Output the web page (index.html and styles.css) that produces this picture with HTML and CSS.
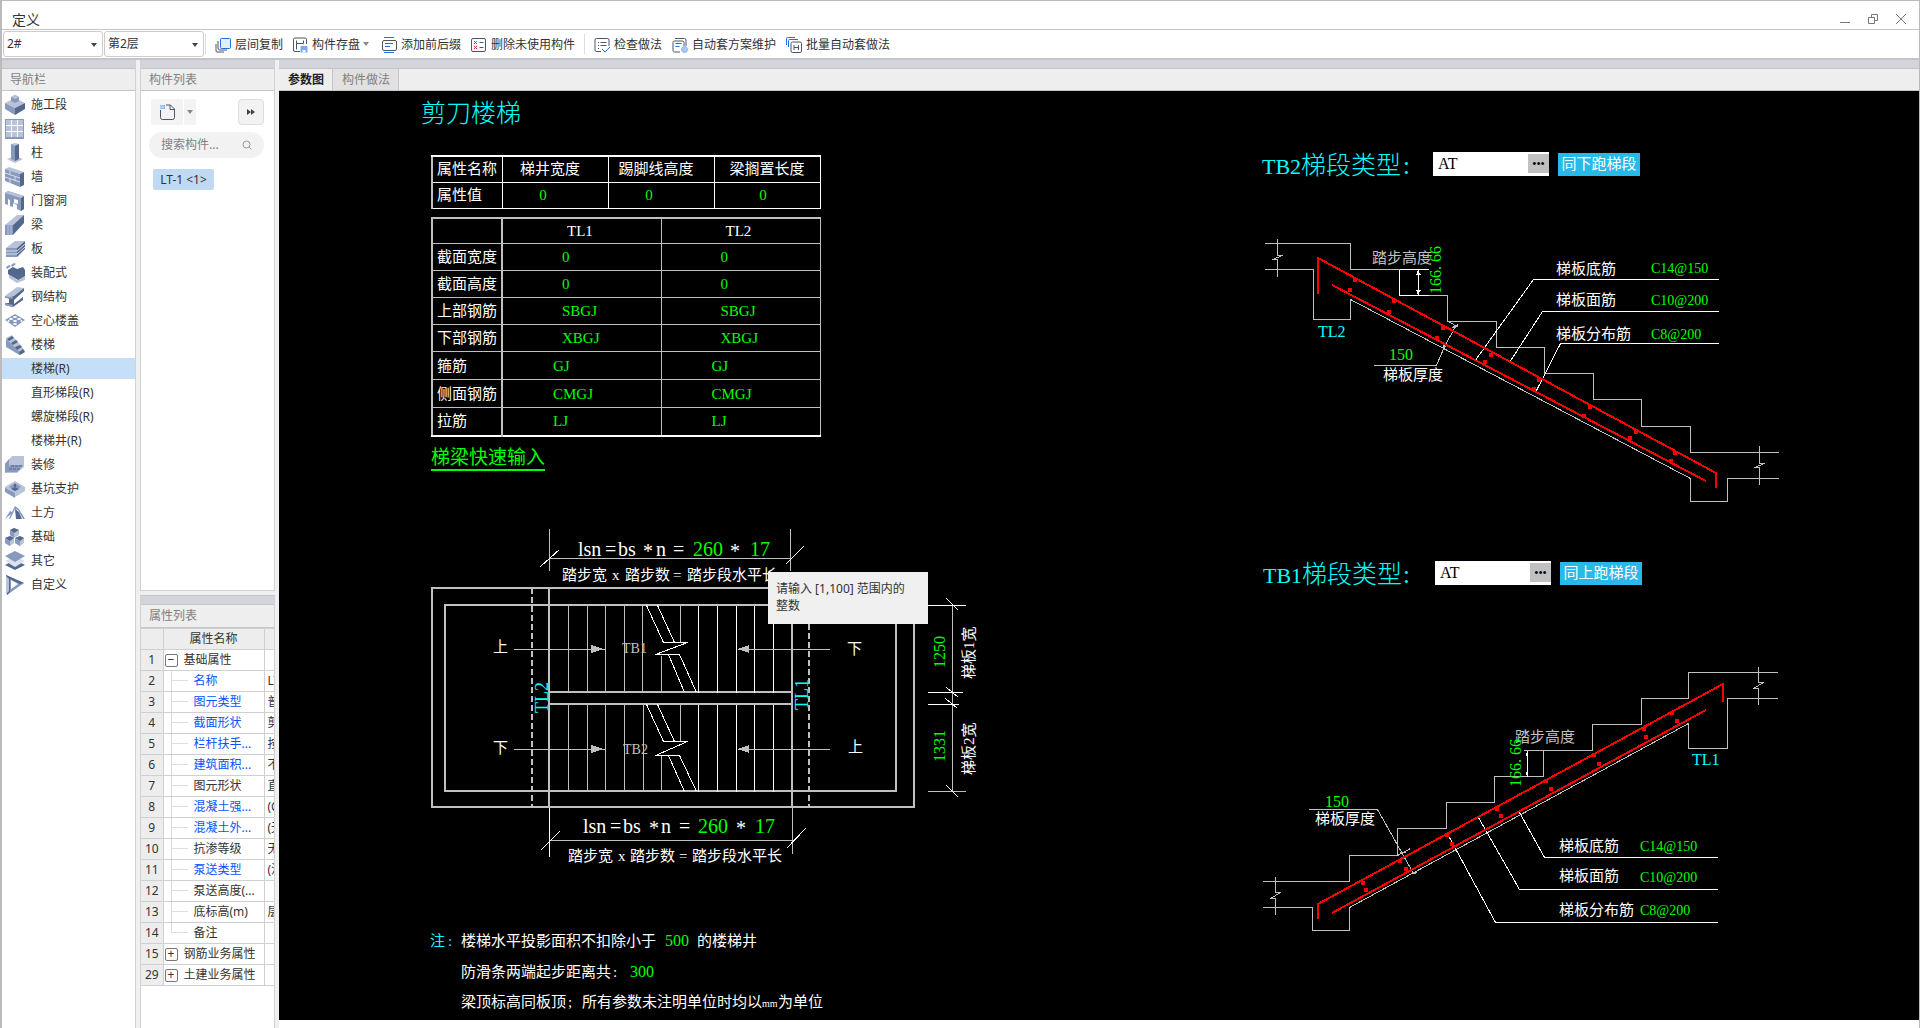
FILE: index.html
```html
<!DOCTYPE html>
<html lang="zh-CN">
<head>
<meta charset="utf-8">
<title>定义</title>
<link rel="stylesheet" href="styles.css">
</head>
<body>
<div class="app">
  <header class="titlebar">
    <h1>定义</h1>
    <div class="window-buttons">
      <button type="button" aria-label="最小化"><svg viewBox="0 0 12 12"><path d="M1 9.500h10"/></svg></button>
      <button type="button" aria-label="还原"><svg viewBox="0 0 12 12"><path d="M1.500 4.500h6v6h-6zM4.500 4.500v-3h6v6h-3"/></svg></button>
      <button type="button" aria-label="关闭"><svg viewBox="0 0 12 12"><path d="M1 1l10 10M11 1L1 11"/></svg></button>
    </div>
  </header>

  <div class="toolbar">
    <div class="combos">
      <label class="combo"><select aria-label="楼栋"><option>2#</option></select></label>
      <label class="combo"><select aria-label="楼层"><option>第2层</option></select></label>
    </div>
    <span class="sep"></span>
    <button type="button" class="tool"><svg viewBox="0 0 16 16"><path d="M1 7v7q0 1 1 1h7" class="k"/><path d="M3 4v7q0 2 2 2h7" class="k"/><rect x="5.500" y="1.500" width="10" height="10" rx="1" fill="#e3eeff" class="b"/></svg>层间复制</button>
    <div class="split">
      <button type="button" class="tool"><svg viewBox="0 0 16 16"><path d="M8 14.500H3q-1.500 0-1.500-1.500V2.500Q1.500 1 3 1h10q1.500 0 1.500 1.500V7M4.500 3.500v9M4.500 6.500h7M11.500 3.500v3" class="k"/><path d="M8.500 9h7v6.500h-7z" fill="#7ba9f3"/><path d="M10.500 13h3v2.500h-3z" fill="#fff"/></svg>构件存盘</button>
      <button type="button" class="drop" aria-label="更多存盘方式"></button>
    </div>
    <button type="button" class="tool"><svg viewBox="0 0 16 16"><path d="M3 .5h10M3 15.500h10M4 6.500h8M4 9.500h5" class="b"/><rect x="1.500" y="3.500" width="14" height="10" rx="1.500" class="k"/></svg>添加前后缀</button>
    <button type="button" class="tool"><svg viewBox="0 0 16 16"><rect x=".5" y="1.500" width="14" height="13" rx="1.500" class="k"/><path d="M3 4l3 3M6 4L3 7M3 9l3 3M6 9l-3 3" class="r"/><path d="M8.500 5.500h4M8.500 10.500h4" class="k"/></svg>删除未使用构件</button>
    <span class="sep"></span>
    <button type="button" class="tool"><svg viewBox="0 0 16 16"><path d="M7 14.500H2.500q-1.500 0-1.500-1.500V3q0-1.500 1.500-1.500h11Q15 1.500 15 3v6M4 5.500h1M6.500 5.500h6M4 8.500h1M6.500 8.500h6M4 11.500h1" class="k"/><path d="M8 12l3 3 5-5" class="b"/></svg>检查做法</button>
    <button type="button" class="tool"><svg viewBox="0 0 16 16"><path d="M3 1.500h9.500Q14 1.500 14 3v6M8 15H2.500Q1 15 1 13.500v-8Q1 4 2.500 4h8Q12 4 12 5.500V9" class="k"/><path d="M3.500 6.500h6M3.500 9.500h4" class="b"/><circle cx="12.500" cy="12.500" r="3" fill="#a9c6f5" stroke="#8fb3ee"/></svg>自动套方案维护</button>
    <button type="button" class="tool"><svg viewBox="0 0 16 16"><path d="M.5 8V1.500q0-1 1-1H9M2.500 10V3.500q0-1 1-1H12" class="b"/><rect x="5" y="5" width="10.500" height="10.500" rx="1.500" class="k"/><path d="M8 8v5M12.500 8v5M8 10.500h4.500" class="k"/></svg>批量自动套做法</button>
  </div>

  <main class="workspace">
    <nav class="panel nav" aria-label="导航栏">
      <div class="grip"></div>
      <h2 class="caption">导航栏</h2>
      <ul class="nav-list">
        <li><a href="#"><svg viewBox="0 0 20 20"><path d="M0 8l10-5 10 5-10 5z" class="l"/><path d="M0 8l10 5v7L0 14z" class="m"/><path d="M20 8l-10 5v7l10-6z" class="d"/><path d="M6 2l4-2 4 2v4l-4 2-4-2z" class="m"/><path d="M6 2l4-2 4 2-4 2z" class="l"/></svg>施工段</a></li>
        <li><a href="#"><svg viewBox="0 0 20 20"><path d="M0 0h19v20H0z" class="m"/><path d="M1 1h17v17H1z" class="l"/><path d="M6.500 1v17M12.500 1v17M1 6.500h17M1 12.500h17" stroke="#fff"/></svg>轴线</a></li>
        <li><a href="#"><svg viewBox="0 0 20 20"><path d="M2 16l8-3 8 3-8 4z" class="l"/><path d="M6 1h4v17l-4-2z" class="m"/><path d="M10 1h4v15l-4 2z" class="d"/><path d="M6 1l4-1 4 1-4 2z" class="l"/></svg>柱</a></li>
        <li><a href="#"><svg viewBox="0 0 20 20"><path d="M0 2l4-2 15 5-4 2z" class="l"/><path d="M0 2l15 5v13L0 14z" class="m"/><path d="M15 7l4-2v13l-4 2z" class="d"/><path d="M0 6l15 5M0 10l15 5M5 4v4M10 10v4M5 12v4" stroke="#d5dceb"/></svg>墙</a></li>
        <li><a href="#"><svg viewBox="0 0 20 20"><path d="M0 2l3-2 16 5v13l-3 2-4-2v-4l-4-2v4l-3-1V9L3 8v6l-3-1z" class="m"/><path d="M16 7l3-2v13l-3 2z" class="d"/><path d="M0 2l3-2 16 5-3 2z" class="l"/><path d="M9 8l4 1v4l-4-1z" fill="#fff"/></svg>门窗洞</a></li>
        <li><a href="#"><svg viewBox="0 0 20 20"><path d="M0 10L12 0h7L8 10z" class="l"/><path d="M0 10h8v10H0z" class="m"/><path d="M8 10L19 0v8L8 20z" class="d"/><path d="M3 10v10M6 10v10" stroke="#b8c3d9"/></svg>梁</a></li>
        <li><a href="#"><svg viewBox="0 0 20 20"><path d="M1 9l9-7h10l-8 7z" class="l"/><path d="M1 9h11v9H1z" class="m"/><path d="M12 9l8-7v8l-8 8z" class="d"/><path d="M1 12h11l8-7M1 15h11l8-7" stroke="#d5dceb" fill="none"/></svg>板</a></li>
        <li><a href="#"><svg viewBox="0 0 20 20"><path d="M4 11l8 6 8-4v4l-8 3-8-5z" class="l"/><path d="M3 7l5-3 4 2 6-2 2 3v6l-7 4-10-6z" class="d"/><path d="M1 4l3-2 2 1-4 3zM6 2l3-2 2 1-4 3z" class="m"/></svg>装配式</a></li>
        <li><a href="#"><svg viewBox="0 0 20 20"><path d="M0 9L12 0l7 1L8 10z" class="l"/><path d="M3 11l6-2L19 1v3L9 13v4l9-7v3L8 20l-8-2v-2h4v-4z" class="d"/><path d="M0 16l8 2v2l-8-2zM0 9l8 1v2l-8-1z" class="m"/></svg>钢结构</a></li>
        <li><a href="#"><svg viewBox="0 0 20 20"><path d="M0 9l10-6 10 6-10 7z" class="m"/><g fill="#fff"><ellipse cx="10" cy="6" rx="2" ry="1"/><ellipse cx="6" cy="8" rx="2" ry="1"/><ellipse cx="14" cy="8" rx="2" ry="1"/><ellipse cx="10" cy="10" rx="2" ry="1"/><ellipse cx="10" cy="13" rx="2" ry="1"/><ellipse cx="3.500" cy="10" rx="1" ry="1"/><ellipse cx="16.500" cy="10" rx="1" ry="1"/></g></svg>空心楼盖</a></li>
        <li><a href="#"><svg viewBox="0 0 20 20"><path d="M1 3l6-3 3 4 4 4 3 4 3 4-6 4L1 11z" class="l"/><path d="M1 4l14 13v3L1 12z" class="m"/><path d="M2 4l5-3 2 2-5 3zM6 8l5-3 2 2-5 3zM10 12l5-2 2 2-5 3zM14 17l4-3 2 3-5 3z" class="d"/></svg>楼梯</a></li>
        <li class="selected"><a href="#" aria-current="true">楼梯(R)</a></li>
        <li><a href="#">直形梯段(R)</a></li>
        <li><a href="#">螺旋梯段(R)</a></li>
        <li><a href="#">楼梯井(R)</a></li>
        <li><a href="#"><svg viewBox="0 0 20 20"><path d="M0 9l7-8h12v11l-7 6H0z" class="l"/><path d="M0 9l4-5v9l-4 5z" class="m"/><path d="M5 10h13l-6 7H1z" class="m"/><path d="M6 11h12M4 14h12" stroke="#54688e" stroke-dasharray="3 1"/></svg>装修</a></li>
        <li><a href="#"><svg viewBox="0 0 20 20"><path d="M0 8l10-6 10 6v4l-10 6-10-6z" class="l"/><path d="M0 9l10 5v5L0 13z" class="m"/><path d="M4 8l6-4 6 4-6 4z" class="m"/><path d="M6 10l4-2 4 2-4 2zM9 5h2v3H9z" class="d"/></svg>基坑支护</a></li>
        <li><a href="#"><svg viewBox="0 0 20 20"><path d="M0 16l5-8 2 1 3-6 4 3 6 10h-2L13 7l-3-1-5 10H4l2-5z" class="m"/><path d="M10 6l4 3 3 7h-6z" class="d"/></svg>土方</a></li>
        <li><a href="#"><svg viewBox="0 0 20 20"><path d="M5 3l4-2 5 2v5l-5 3-4-3zM0 11l5-2 4 2v5l-4 3-5-3zM10 11l5-2 4 2v5l-4 3-5-3z" class="l"/><path d="M5 3l4-2 5 2-5 3zM0 11l5-2 4 2-4 3zM10 11l5-2 4 2-4 3z" class="d"/><path d="M5 4l4 2v5l-4-3zM0 12l5 2v5l-5-3zM10 12l5 2v5l-5-3z" class="m"/></svg>基础</a></li>
        <li><a href="#"><svg viewBox="0 0 20 20"><path d="M0 14l10-5 10 5-10 5z" class="d"/><path d="M0 10l10-5 10 5-10 6z" fill="#dce2ee"/><path d="M0 5l10-5 10 5-10 6z" class="m"/></svg>其它</a></li>
        <li><a href="#"><svg viewBox="0 0 20 20"><path d="M1 0l18 8L2 20z" class="m"/><path d="M1 0l18 8-4 1L5 4v13l-3 3z" class="d"/><path d="M6 5l7 4-7 5z" fill="#fff"/><path d="M1 1l3 3v12l-3 3z" class="l"/></svg>自定义</a></li>
      </ul>
    </nav>

    <div class="side">
      <section class="panel components">
        <div class="grip"></div>
        <h2 class="caption">构件列表</h2>
        <div class="comp-body">
          <div class="comp-tools">
            <button type="button" class="new" aria-label="新建"><svg viewBox="0 0 16 16"><path d="M1.500 6v7.500q0 2 2 2h10q2 0 2-2V5l-4-4H7M11 1v4.500h4" class="k"/><path d="M1 1h5v4H1z" fill="#6fa0ee"/><path d="M2 1v4M4 1v4M1 3h5" stroke="#c7dcff"/></svg></button>
            <button type="button" class="drop boxed" aria-label="新建选项"></button>
            <button type="button" class="more" aria-label="展开"><svg viewBox="0 0 8 6"><path d="M0 0l4 3-4 3zM4 0l4 3-4 3z" fill="#444"/></svg></button>
          </div>
          <label class="search"><input type="text" placeholder="搜索构件..." aria-label="搜索构件"><svg viewBox="0 0 10 10"><circle cx="4.500" cy="4.500" r="3.500"/><path d="M7 7l2.500 2.500"/></svg></label>
          <button type="button" class="chip">LT-1 &lt;1&gt;</button>
        </div>
      </section>

      <section class="panel props">
        <div class="grip"></div>
        <h2 class="caption">属性列表</h2>
        <div class="props-clip">
        <table class="props-table">
          <colgroup><col class="c-no"><col class="c-name"><col class="c-val"></colgroup>
          <thead><tr><th></th><th>属性名称</th><th></th></tr></thead>
          <tbody>
            <tr><th>1</th><td><div class="cell"><button type="button" class="fold">−</button>基础属性</div></td><td></td></tr>
            <tr><th>2</th><td><div class="cell"><i></i><b>名称</b></div></td><td>LT</td></tr>
            <tr><th>3</th><td><div class="cell"><i></i><b>图元类型</b></div></td><td>普</td></tr>
            <tr><th>4</th><td><div class="cell"><i></i><b>截面形状</b></div></td><td>剪</td></tr>
            <tr><th>5</th><td><div class="cell"><i></i><b>栏杆扶手...</b></div></td><td>按</td></tr>
            <tr><th>6</th><td><div class="cell"><i></i><b>建筑面积...</b></div></td><td>不</td></tr>
            <tr><th>7</th><td><div class="cell"><i></i>图元形状</div></td><td>直</td></tr>
            <tr><th>8</th><td><div class="cell"><i></i><b>混凝土强...</b></div></td><td>(C</td></tr>
            <tr><th>9</th><td><div class="cell"><i></i><b>混凝土外...</b></div></td><td>(无</td></tr>
            <tr><th>10</th><td><div class="cell"><i></i>抗渗等级</div></td><td>无</td></tr>
            <tr><th>11</th><td><div class="cell"><i></i><b>泵送类型</b></div></td><td>(混</td></tr>
            <tr><th>12</th><td><div class="cell"><i></i>泵送高度(...</div></td><td></td></tr>
            <tr><th>13</th><td><div class="cell"><i></i>底标高(m)</div></td><td>层</td></tr>
            <tr><th>14</th><td><div class="cell"><i class="last"></i>备注</div></td><td></td></tr>
            <tr><th>15</th><td><div class="cell"><button type="button" class="fold">+</button>钢筋业务属性</div></td><td></td></tr>
            <tr><th>29</th><td><div class="cell"><button type="button" class="fold">+</button>土建业务属性</div></td><td></td></tr>
          </tbody>
        </table>
        </div>
      </section>
    </div>

    <section class="editor">
      <div class="grip"></div>
      <div class="tabs" role="tablist">
        <button type="button" role="tab" aria-selected="true" class="active">参数图</button>
        <button type="button" role="tab" aria-selected="false">构件做法</button>
      </div>
      <div class="canvas">
        <svg class="drawing" width="1641" height="929" viewBox="279 91 1641 929">
          <!-- plan view -->
          <g class="w2">
            <path d="M432 588H914V807H432zM445 605H896V791H445zM549 588V807M792 588V807M549 692H792M549 704H792"/>
            <path d="M532 588V807M809 588V807" stroke-dasharray="6 3"/>
          </g>
          <g class="w1" transform="translate(.5 .5)">
            <path d="M568 605V692M587 605V692M605 605V692M624 605V692M642 605V692M661 655V692M680 605V642M568 704V791M587 704V791M605 704V791M624 704V791M643 704V791M661 755V791M680 704V741"/>
            <path class="wh" d="M698 605V692M717 605V692M736 605V692M754 605V692M773 605V692M698 704V791M717 704V791M736 704V791M754 704V791M773 704V791"/>
            <path class="wh" d="M646 605L663 642H687L655 654H679L696 692M657 605L674 642M668 654L684 692M646 704L663 741H687L655 755H679L696 791M657 704L674 741M668 755L684 791"/>
            <path d="M513 649H604M513 749H604M829 649H737M829 749H737"/>
            <path d="M549 528V570M790 528V570M549 558H790M549 840H792M792 807V853M952 605V791M927 791H965"/>
            <path class="wh" d="M549 807V856M540 566L559 549M785 564L803 546M540 850L559 831M786 848L805 828M927 605H965M927 692H962M927 704H958M946 598L958 610M946 687L958 697M945 698L957 708M946 785L958 797"/>
          </g>
          <path class="grey" d="M591 645L604 649L591 653zM591 745L604 749L591 753zM749 645L738 649L749 653zM749 745L738 749L749 753z"/>

          <!-- TB2 section -->
          <g class="w1" transform="translate(.5 .5)">
            <path d="M1264 243H1350V269H1428M1264 269H1313V319H1350V299L1690 478V501H1727V478H1778M1399 295H1447V321H1496V347H1544V373H1593V399H1641V426H1690V452H1778"/>
            <path d="M1277 238V255H1282L1272 259H1277V276M1759 445V463H1764L1754 467H1759V484"/>
            <path d="M1373 365H1436L1444 346L1455 326M1448 321L1458 327M1452 327L1458 324M1443 347L1443 342L1446 347"/>
            <path class="wh" d="M1399 269H1428M1399 269V295H1428M1418 269V295M1474 361L1533 279H1718M1509 362L1542 311H1718M1535 392L1560 343H1718"/>
          </g>
          <path class="white" d="M1418 270L1421 275H1416zM1418 295L1421 290H1416z"/>
          <path class="bar" d="M1318 294V258L1716 473V488M1332 285L1706 481"/>
          <path class="dots" d="M1355 280h0M1394 301h0M1443 328h0M1491 355h0M1539 380h0M1590 407h0M1636 432h0M1675 453h0M1350 290h0M1389 312h0M1437 338h0M1485 362h0M1534 389h0M1584 416h0M1630 438h0M1671 461h0"/>

          <!-- TB1 section -->
          <g class="w1" transform="translate(.5 .5)">
            <path d="M1262 881H1349V855H1397V828H1446V802H1494V776H1543V750M1523 750H1592V724H1641V698H1688V672H1777M1777 698H1727V748H1688V723L1349 907V930H1312V907H1262"/>
            <path d="M1275 876V892H1280L1270 898H1275V914M1758 666V682H1763L1753 688H1758V704"/>
            <path d="M1308 809H1377L1413 873L1417 872M1397 855L1410 848M1399 852H1405"/>
            <path class="wh" d="M1527 750V776M1526 752V755M1526 771V774M1519 812L1544 857H1717M1478 817L1519 889H1717M1449 837L1495 922H1717"/>
          </g>
          <path class="bar" d="M1318 919V904L1723 684V702M1332 913L1706 710"/>
          <path class="dots" d="M1363 883h0M1400 861h0M1447 835h0M1497 809h0M1546 781h0M1594 755h0M1644 729h0M1672 713h0M1366 890h0M1406 869h0M1452 844h0M1501 816h0M1551 789h0M1599 764h0M1646 737h0M1677 721h0"/>

          <g class="t15">
            <text class="t25 cy" x="421" y="122">剪刀楼梯</text>
            <text x="493" y="652">上</text><text x="493" y="753">下</text><text x="847" y="654">下</text><text x="848" y="752">上</text>
            <text class="dim" x="622" y="653">TB1</text><text class="dim" x="623" y="754">TB2</text>
            <text class="t18 cy" transform="translate(548 713) rotate(-90)">TL2</text>
            <text class="t18 cy" transform="translate(808 710) rotate(-90)">TL1</text>
            <text class="t20" y="556"><tspan x="578">lsn</tspan><tspan x="605">=</tspan><tspan x="618">bs</tspan><tspan x="656">n</tspan><tspan x="673">=</tspan><tspan class="gr" x="693">260</tspan><tspan class="gr" x="750">17</tspan></text>
            <text class="t20" y="558"><tspan x="643">*</tspan><tspan x="730">*</tspan></text>
            <text y="580"><tspan x="562">踏步宽</tspan><tspan x="612">x</tspan><tspan x="625">踏步数</tspan><tspan x="673">=</tspan><tspan x="687">踏步段水平长</tspan></text>
            <text class="t20" y="833"><tspan x="583">lsn</tspan><tspan x="610">=</tspan><tspan x="623">bs</tspan><tspan x="661">n</tspan><tspan x="679">=</tspan><tspan class="gr" x="698">260</tspan><tspan class="gr" x="755">17</tspan></text>
            <text class="t20" y="835"><tspan x="649">*</tspan><tspan x="736">*</tspan></text>
            <text y="861"><tspan x="568">踏步宽</tspan><tspan x="618">x</tspan><tspan x="630">踏步数</tspan><tspan x="679">=</tspan><tspan x="692">踏步段水平长</tspan></text>
            <text class="gr t16" transform="translate(945 668) rotate(-90)">1250</text>
            <text class="gr t16" transform="translate(945 762) rotate(-90)">1331</text>
            <text transform="translate(974 679) rotate(-90)">梯板1宽</text>
            <text transform="translate(974 775) rotate(-90)">梯板2宽</text>

            <text y="946"><tspan class="cy" x="430">注</tspan><tspan class="cy" x="448">:</tspan><tspan x="461">楼梯水平投影面积不扣除小于</tspan><tspan class="gr t16" x="665">500</tspan><tspan x="697">的楼梯井</tspan></text>
            <text y="977"><tspan x="461">防滑条两端起步距离共</tspan><tspan x="613">:</tspan><tspan class="gr t16" x="630">300</tspan></text>
            <text y="1007"><tspan x="461">梁顶标高同板顶</tspan><tspan x="568">;</tspan><tspan x="582">所有参数未注明单位时均以</tspan><tspan class="mm" x="762">mm</tspan><tspan x="778">为单位</tspan></text>

            <text class="cy" y="174"><tspan class="t22" x="1262">TB2</tspan><tspan class="t25" x="1301">梯段类型</tspan><tspan class="t25" x="1403">:</tspan></text>
            <text class="dim15" x="1372" y="263">踏步高度</text>
            <text class="gr t16" transform="translate(1441 294) rotate(-90)"><tspan x="0">166.</tspan><tspan x="32">66</tspan></text>
            <text class="cy t16" x="1318" y="337">TL2</text>
            <text class="gr t16" x="1389" y="360">150</text><text x="1383" y="380">梯板厚度</text>
            <text x="1556" y="274">梯板底筋</text><text class="gr t14" x="1651" y="273">C14@150</text>
            <text x="1556" y="305">梯板面筋</text><text class="gr t14" x="1651" y="305">C10@200</text>
            <text x="1556" y="339">梯板分布筋</text><text class="gr t14" x="1651" y="339">C8@200</text>

            <text class="cy" y="583"><tspan class="t22" x="1263">TB1</tspan><tspan class="t25" x="1302">梯段类型</tspan><tspan class="t25" x="1403">:</tspan></text>
            <text class="dim15" x="1515" y="742">踏步高度</text>
            <text class="gr t16" transform="translate(1521 787) rotate(-90)"><tspan x="0">166.</tspan><tspan x="32">66</tspan></text>
            <text class="cy t16" x="1692" y="765">TL1</text>
            <text class="gr t16" x="1325" y="807">150</text><text x="1315" y="824">梯板厚度</text>
            <text x="1559" y="851">梯板底筋</text><text class="gr t14" x="1640" y="851">C14@150</text>
            <text x="1559" y="881">梯板面筋</text><text class="gr t14" x="1640" y="882">C10@200</text>
            <text x="1559" y="915">梯板分布筋</text><text class="gr t14" x="1640" y="915">C8@200</text>
          </g>
        </svg>

        <div class="tables">
          <table class="cad first">
            <colgroup><col class="k1"><col class="k2"><col class="k2"><col class="k2"></colgroup>
            <tr><th>属性名称</th><th class="mid">梯井宽度</th><th class="mid">踢脚线高度</th><th class="mid wide">梁搁置长度</th></tr>
            <tr><th>属性值</th><td class="zero">0</td><td class="zero">0</td><td class="zero wide">0</td></tr>
          </table>
          <table class="cad second">
            <colgroup><col class="k1"><col class="k3"><col class="k3"></colgroup>
            <tr class="top"><th></th><th class="head">TL1</th><th class="head">TL2</th></tr>
            <tr><th>截面宽度</th><td>0</td><td>0</td></tr>
            <tr><th>截面高度</th><td>0</td><td>0</td></tr>
            <tr><th>上部钢筋</th><td>SBGJ</td><td>SBGJ</td></tr>
            <tr><th>下部钢筋</th><td>XBGJ</td><td>XBGJ</td></tr>
            <tr class="near"><th>箍筋</th><td>GJ</td><td>GJ</td></tr>
            <tr class="near"><th>侧面钢筋</th><td>CMGJ</td><td>CMGJ</td></tr>
            <tr class="near"><th>拉筋</th><td>LJ</td><td>LJ</td></tr>
          </table>
          <a href="#" class="quick">梯梁快速输入</a>
        </div>

        <div class="type-row tb2">
          <div class="picker"><input type="text" value="AT" aria-label="TB2梯段类型"><button type="button" aria-label="选择类型">•••</button></div>
          <button type="button" class="same">同下跑梯段</button>
        </div>
        <div class="type-row tb1">
          <div class="picker"><input type="text" value="AT" aria-label="TB1梯段类型"><button type="button" aria-label="选择类型">•••</button></div>
          <button type="button" class="same">同上跑梯段</button>
        </div>

        <div class="tip" role="tooltip">请输入 [1,100] 范围内的整数</div>
      </div>
    </section>
  </main>
</div>
</body>
</html>
```
FILE: styles.css
```css
* { box-sizing: border-box; }

body {
  margin: 0;
  background: #fff;
  color: #333;
  font: 12px/16px "Noto Sans", "Noto Sans CJK SC", sans-serif;
}

button, input, select {
  margin: 0;
  padding: 0;
  border: 0;
  background: none;
  color: inherit;
  font: inherit;
}

h1, h2 { margin: 0; font-weight: 400; }

.app {
  display: flex;
  flex-direction: column;
  height: 100vh;
  border: solid #bbb;
  border-width: 1px 1px 0 2px;
}

/* title bar */
.titlebar {
  display: flex;
  justify-content: space-between;
  height: 29px;
  padding: 9px 12px 0 10px;
  border-bottom: 1px solid #c4c4c4;
}
.titlebar h1 { font-size: 14px; line-height: 20px; }
.window-buttons { display: flex; gap: 16px; padding-top: 3px; }
.window-buttons button { width: 12px; height: 12px; }
.window-buttons svg { display: block; fill: none; stroke: #777; }

/* toolbar */
.toolbar {
  display: flex;
  align-items: center;
  gap: 10px;
  height: 30px;
  padding: 0 1px;
  border-bottom: 2px solid #c3c5cb;
}
.combos { display: flex; gap: 1px; margin-right: -8px; }
.combo {
  position: relative;
  width: 100px;
  height: 26px;
  border: 1px solid #ccc;
  border-radius: 3px;
}
.combo select {
  width: 100%;
  height: 100%;
  padding-left: 3px;
  appearance: none;
  outline: 0;
}
.combo::after {
  content: "";
  position: absolute;
  right: 5px;
  top: 11px;
  border: solid transparent;
  border-width: 4px 3px 0;
  border-top-color: #444;
}
.sep { width: 1px; height: 20px; margin: 0 -1px; background: #ddd; }
.tool {
  display: flex;
  align-items: center;
  gap: 4px;
  padding-top: 2px;
  white-space: nowrap;
}
.tool svg { width: 16px; height: 16px; }
.k { fill: none; stroke: #4c5468; }
.b { stroke: #1f6fe5; }
.b:not([fill]) { fill: none; }
.r { fill: none; stroke: #e0333c; }
.split { display: flex; margin: 0 -1px; }
.drop {
  display: flex;
  align-items: center;
  justify-content: center;
  width: 12px;
}
.drop::after {
  content: "";
  border: solid transparent;
  border-width: 4px 3px 0;
  border-top-color: #888;
}

/* workspace */
.workspace {
  display: flex;
  flex: 1;
  gap: 4px;
  min-height: 0;
  background: #f0f0f0;
}
.panel {
  display: flex;
  flex-direction: column;
  border: solid #d0d2d6;
  border-width: 0 1px 0 0;
  background: #fff;
}
.grip {
  flex: none;
  height: 9px;
  border-bottom: 1px solid #c3c5cb;
  background: #d3d5db;
}
.caption {
  flex: none;
  height: 22px;
  padding-left: 8px;
  border-bottom: 1px solid #c3c5cb;
  background: #eee;
  color: #808080;
  font-size: 12px;
  line-height: 22px;
}
.nav { flex: none; width: 134px; }
.nav-list {
  display: flex;
  flex-direction: column;
  gap: 3px;
  margin: 0;
  padding: 3px 0 0;
  list-style: none;
}
.nav-list a {
  display: flex;
  align-items: center;
  height: 21px;
  padding-left: 29px;
  color: #333;
  text-decoration: none;
}
.nav-list svg { width: 20px; height: 20px; margin: 0 6px 0 -26px; }
.nav-list .selected { background: #c6dff8; }
.l { fill: #b8c3d9; }
.m { fill: #8799bd; }
.d { fill: #54688e; }

.side {
  display: flex;
  flex: none;
  flex-direction: column;
  gap: 4px;
  width: 135px;
}
.side .panel { border-left-width: 1px; }
.components { flex: 1; border-bottom-width: 1px; }
.comp-body { padding: 8px 10px 0 8px; }
.comp-tools { display: flex; gap: 1px; padding-left: 2px; }
.new, .boxed, .more { height: 26px; background: #f3f3f3; border-radius: 2px; }
.new { width: 32px; }
.new svg { display: block; width: 16px; height: 16px; margin: auto; }
.more {
  width: 26px;
  margin-left: auto;
  border: 1px solid #ddd;
  border-radius: 4px;
}
.more svg { display: block; width: 8px; height: 6px; margin: auto; }
.search {
  display: flex;
  align-items: center;
  height: 26px;
  margin-top: 7px;
  padding: 0 12px;
  border-radius: 13px;
  background: #f2f2f2;
}
.search input { flex: 1; width: 60px; outline: 0; }
.search input::placeholder { color: #808080; opacity: 1; }
.search svg { width: 10px; height: 10px; fill: none; stroke: #999; }
.chip {
  display: block;
  width: 61px;
  height: 21px;
  margin: 11px 4px 0;
  border-radius: 2px;
  background: #c0daf3;
  white-space: nowrap;
}

/* property grid */
.props { flex: none; height: 433px; overflow: hidden; }
.props .grip { height: 10px; border-top: 1px solid #c3c5cb; }
.props .caption { height: 23px; }
.props-clip { overflow: hidden; }
.props-table {
  width: 220px;
  table-layout: fixed;
  border-collapse: collapse;
}
.c-no { width: 22px; }
.c-name { width: 101px; }
.props-table th, .props-table td {
  height: 21px;
  padding: 0;
  border: 1px solid #d0d0d0;
  border-left: 0;
  font-weight: 400;
  line-height: 20px;
  white-space: nowrap;
}
.props-table th { background: #ededed; }
.props-table tbody td:last-child { padding-left: 3px; }
.cell { display: flex; align-items: center; height: 20px; }
.cell b { color: #0b52ff; font-weight: 400; }
.cell i {
  width: 17px;
  height: 20px;
  margin: 0 6px 0 7px;
  background:
    linear-gradient(#ddd, #ddd) 0 0 / 1px 100% no-repeat,
    linear-gradient(#ddd, #ddd) 0 9px / 100% 1px no-repeat;
}
.cell .last {
  background:
    linear-gradient(#ddd, #ddd) 0 0 / 1px 9px no-repeat,
    linear-gradient(#ddd, #ddd) 0 9px / 100% 1px no-repeat;
}
.fold {
  width: 13px;
  height: 13px;
  margin: 0 6px 0 1px;
  border: 1px solid #777;
  border-radius: 2px;
  line-height: 10px;
}

/* parameter drawing */
.editor {
  display: flex;
  flex: 1;
  flex-direction: column;
  min-width: 0;
  background: #fff;
}
.tabs {
  display: flex;
  flex: none;
  height: 22px;
  border-bottom: 1px solid #c3c5cb;
  background: #eee;
}
.tabs button {
  padding: 0 8px 0 9px;
  border-right: 1px solid #c3c5cb;
  background: #e1e1e1;
  color: #808080;
}
.tabs .active { background: #eee; color: #222; font-weight: 700; }
.canvas {
  position: relative;
  flex: 1;
  min-height: 0;
  margin-bottom: 8px;
  overflow: hidden;
  background: #000;
  color: #fff;
  font: 15px/18px "Liberation Serif", "Noto Sans CJK SC", serif;
}
.drawing { display: block; }
.drawing path { shape-rendering: crispEdges; }
.w2 { fill: none; stroke: #c0c0c0; stroke-width: 2; }
.w1 { fill: none; stroke: #c0c0c0; }
.wh { stroke: #fff; }
.grey { fill: #c0c0c0; }
.white { fill: #fff; }
.bar { fill: none; stroke: #f00; stroke-width: 2; }
.dots { stroke: #f00; stroke-width: 5; stroke-linecap: round; }
.drawing text { fill: #fff; }
.t15 { font-size: 15px; }
.drawing .t14 { font-size: 14px; }
.drawing .t16 { font-size: 16px; }
.drawing .t18 { font-size: 18px; }
.drawing .t20 { font-size: 20px; }
.drawing .t22 { font-size: 22px; }
.drawing .t25 { font-size: 25px; font-weight: 300; }
.drawing .mm { font-size: 10px; }
.drawing .cy { fill: #0ff; }
.drawing .gr { fill: #0f0; }
.drawing .dim { fill: #c0c0c0; font-size: 14px; }
.drawing .dim15 { fill: #c0c0c0; }

.tables { position: absolute; left: 152px; top: 64px; }
.cad {
  width: 388px;
  table-layout: fixed;
  border-collapse: collapse;
}
.k1 { width: 70px; }
.k2 { width: 106px; }
.k3 { width: 159px; }
.cad th, .cad td {
  height: 27px;
  padding: 0 0 0 4px;
  border: 1px solid #c0c0c0;
  font-weight: 400;
  text-align: left;
  white-space: nowrap;
}
.cad td { color: #0f0; padding-left: 59px; }
.cad .mid { padding: 0 10px 0 0; text-align: center; }
.first { border: 1px solid #fff; border-width: 2px 1px 1px; border-left: 2px solid #c0c0c0; }
.first th, .first td { height: 26px; border-color: #fff; }
.first .zero { padding: 0 24px 0 0; text-align: center; }
.first .mid.wide { padding: 0; }
.first .zero.wide { padding: 0 8px 0 0; }
.second { margin-top: 8px; border: 2px solid #c0c0c0; border-bottom-color: #fff; border-right-width: 1px; }
.second th:first-child { border-right-width: 2px; }
.second .top th { height: 26px; }
.second .head { padding-left: 64px; }
.second .near th, .second .near td { height: 28px; }
.second .near td { padding-left: 50px; }
.quick {
  display: inline-block;
  margin-top: 10px;
  border-bottom: 2px solid #0f0;
  color: #0f0;
  font-size: 19px;
  line-height: 22px;
  text-decoration: none;
}

.type-row { position: absolute; display: flex; align-items: center; gap: 9px; }
.tb2 { left: 1154px; top: 61px; }
.tb1 { left: 1156px; top: 470px; }
.picker {
  display: flex;
  width: 116px;
  height: 24px;
  padding: 2px 0 3px;
  background: #fff;
  color: #000;
}
.picker input { flex: 1; min-width: 0; padding-left: 5px; font-size: 16px; outline: 0; }
.picker button { width: 21px; background: #c0c0c0; font-size: 12px; line-height: 18px; }
.same { width: 82px; height: 23px; background: #27b9e7; }
.tip {
  position: absolute;
  left: 489px;
  top: 481px;
  width: 160px;
  height: 52px;
  padding: 8px 18px 8px 8px;
  background: #f0f0f0;
  color: #333;
  font: 12px/17px "Noto Sans", "Noto Sans CJK SC", sans-serif;
}
```
